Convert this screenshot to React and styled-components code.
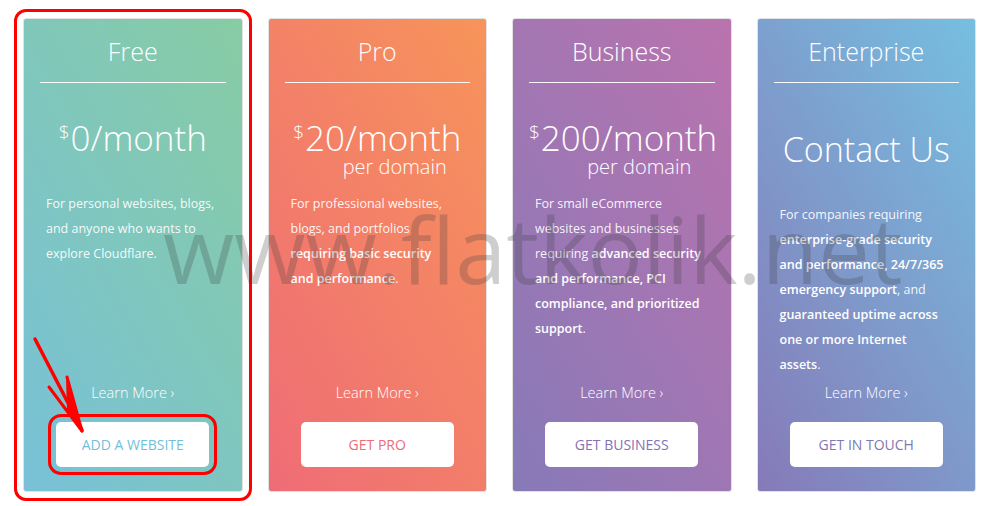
import React from "react";
import styled, { createGlobalStyle } from "styled-components";

const plans = [
  {
    name: "Free",
    price: "0",
    perDomain: false,
    from: "#78c1d8",
    to: "#87cca3",
    accent: "#72bfdc",
    action: "ADD A WEBSITE",
    highlight: true,
    lines: [
      [["For personal websites, blogs,"]],
      [["and anyone who wants to"]],
      [["explore Cloudflare."]],
    ],
  },
  {
    name: "Pro",
    price: "20",
    perDomain: true,
    from: "#ef6c76",
    to: "#f7945a",
    accent: "#ee6b7b",
    action: "GET PRO",
    lines: [
      [["For professional websites,"]],
      [["blogs, and portfolios"]],
      [["requiring basic security", true]],
      [["and performance", true], ["."]],
    ],
  },
  {
    name: "Business",
    price: "200",
    perDomain: true,
    from: "#877ab8",
    to: "#ba73ae",
    accent: "#8671b3",
    action: "GET BUSINESS",
    lines: [
      [["For small eCommerce"]],
      [["websites and businesses"]],
      [["requiring "], ["advanced security", true]],
      [["and performance, PCI", true]],
      [["compliance, and prioritized", true]],
      [["support", true], ["."]],
    ],
  },
  {
    name: "Enterprise",
    contact: true,
    from: "#867ab8",
    to: "#76bfe1",
    accent: "#7d78b3",
    action: "GET IN TOUCH",
    lines: [
      [["For companies requiring"]],
      [["enterprise-grade security", true]],
      [["and performance, 24/7/365", true]],
      [["emergency support", true], [", and"]],
      [["guaranteed uptime across", true]],
      [["one or more Internet", true]],
      [["assets", true], ["."]],
    ],
  },
];

const App = () => {
  return (
    <Page>
      <GlobalStyle />
      {plans.map((plan) => (
        <Card
          key={plan.name}
          $from={plan.from}
          $to={plan.to}
          $highlight={plan.highlight}
        >
          <Title>{plan.name}</Title>
          <Divider />
          <PriceBlock $contact={plan.contact}>
            {plan.contact ? (
              <Price $size={34}>Contact Us</Price>
            ) : (
              <>
                <Price $size={35}>
                  <Dollar>$</Dollar>
                  {plan.price}/month
                </Price>
                {plan.perDomain && <PerDomain>per domain</PerDomain>}
              </>
            )}
          </PriceBlock>
          <Description>
            {plan.lines.map((line, i) => (
              <Line key={i}>
                {line.map(([text, bold], j) =>
                  bold ? <Strong key={j}>{text}</Strong> : <span key={j}>{text}</span>
                )}
              </Line>
            ))}
          </Description>
          <LearnMore href="#">Learn More ›</LearnMore>
          <ActionButton $color={plan.accent} $highlight={plan.highlight}>
            {plan.action}
          </ActionButton>
        </Card>
      ))}
      <Watermark>www.flatkolik.net</Watermark>
      <Arrow width="100" height="110" viewBox="0 0 100 110">
        <line x1="3" y1="4" x2="50" y2="95" stroke="#ff0000" strokeWidth="3.5" strokeLinecap="round" />
        <polygon points="50,96 17,53 35,74 34,43 44,78" fill="#ff0000" />
        <line x1="50" y1="96" x2="17" y2="52" stroke="#ff0000" strokeWidth="3" strokeLinecap="round" />
        <line x1="50" y1="96" x2="35" y2="42" stroke="#ff0000" strokeWidth="3" strokeLinecap="round" />
      </Arrow>
    </Page>
  );
};

const GlobalStyle = createGlobalStyle`
  body {
    margin: 0;
    background: #ffffff;
    font-family: "Open Sans", "Liberation Sans", sans-serif;
  }
`;

const Page = styled.div`
  position: relative;
  display: flex;
  gap: 25px;
  padding: 18px 0 0 23px;
  width: 991px;
  height: 506px;
  box-sizing: border-box;
  overflow: hidden;
`;

const Card = styled.div`
  display: flex;
  flex-direction: column;
  flex-shrink: 0;
  width: 219.5px;
  height: 474px;
  box-sizing: border-box;
  padding: 16px 16px 24px;
  border: 1px solid #e2e2e2;
  border-radius: 3px;
  background: linear-gradient(60deg, ${(p) => p.$from} 0%, ${(p) => p.$to} 100%);
  color: #ffffff;
  outline: ${(p) => (p.$highlight ? "3px solid #ff0000" : "none")};
  outline-offset: 6px;
`;

const Title = styled.div`
  font-size: 25px;
  font-weight: 300;
  line-height: 32px;
  text-align: center;
`;

const Divider = styled.div`
  height: 1px;
  margin-top: 15px;
  background: rgba(255, 255, 255, 0.95);
`;

const PriceBlock = styled.div`
  height: ${(p) => (p.$contact ? "119px" : "108px")};
  padding-top: ${(p) => (p.$contact ? "46px" : "35px")};
  box-sizing: border-box;
  text-align: center;
`;

const Price = styled.div`
  font-size: ${(p) => p.$size}px;
  font-weight: 300;
  line-height: 40px;
  white-space: nowrap;
`;

const Dollar = styled.span`
  display: inline-block;
  vertical-align: top;
  font-size: 19px;
  line-height: 19px;
  margin-top: 5px;
  margin-right: 1px;
`;

const PerDomain = styled.div`
  font-size: 20px;
  font-weight: 300;
  line-height: 22px;
  margin-top: -2px;
  padding-left: 35px;
`;

const Description = styled.div`
  flex: 1;
  padding-left: 6px;
  font-size: 12.5px;
  line-height: 25px;
  color: rgba(255, 255, 255, 0.93);
`;

const Line = styled.div`
  white-space: nowrap;
`;

const Strong = styled.span`
  font-weight: 600;
  color: #ffffff;
`;

const LearnMore = styled.a`
  display: block;
  margin-top: 1px;
  font-size: 14.5px;
  font-weight: 300;
  line-height: 20px;
  text-align: center;
  color: #ffffff;
  text-decoration: none;
`;

const ActionButton = styled.button`
  align-self: center;
  width: 153px;
  height: 45px;
  margin-top: 19px;
  border: none;
  border-radius: 5px;
  background: #ffffff;
  color: ${(p) => p.$color};
  font-family: "Open Sans", "Liberation Sans", sans-serif;
  font-size: 14px;
  font-weight: 400;
  outline: ${(p) => (p.$highlight ? "3px solid #ff0000" : "none")};
  outline-offset: 5px;
`;

const Watermark = styled.div`
  position: absolute;
  left: 163px;
  top: 202px;
  font-size: 92px;
  line-height: 93px;
  font-weight: 400;
  color: rgba(60, 60, 60, 0.25);
  white-space: nowrap;
  pointer-events: none;
`;

const Arrow = styled.svg`
  position: absolute;
  left: 32px;
  top: 335px;
  pointer-events: none;
`;

export default App;
